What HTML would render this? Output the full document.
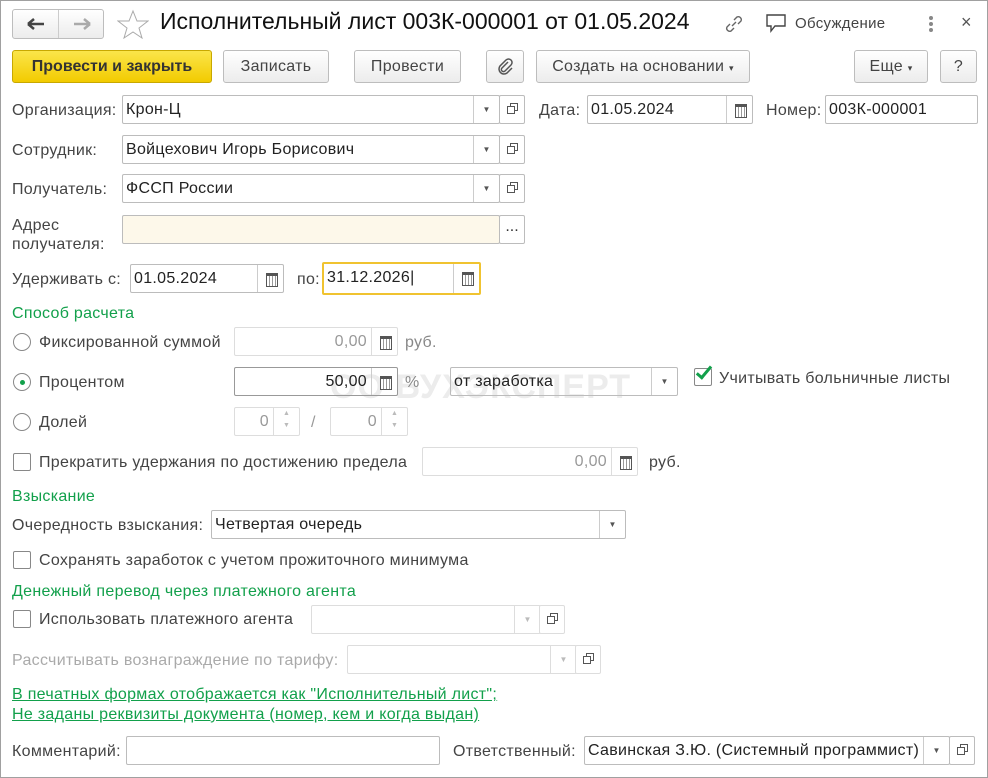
<!DOCTYPE html><html><head><meta charset="utf-8"><style>
*{box-sizing:border-box;margin:0;padding:0}
body{width:988px;height:778px;background:#fff;font-family:"Liberation Sans",Arial,sans-serif;font-size:16px;letter-spacing:0.3px;color:#333;position:relative;overflow:hidden}
.frame{position:absolute;left:0;top:0;width:988px;height:778px;border:1px solid #a0a0a0}
.a{position:absolute;white-space:nowrap}
.btn{position:absolute;height:33px;border:1px solid #bdbdbd;border-radius:3px;background:linear-gradient(#fff,#ececec);text-align:center;line-height:31px;color:#444;font-size:16px}
.in{position:absolute;height:29px;border:1px solid #bcbcbc;border-radius:2px;background:#fff;line-height:27px;padding-left:3px;color:#222;white-space:nowrap;overflow:hidden}
.dd{position:absolute;top:0;right:0;width:26px;height:27px;border-left:1px solid #ccc;text-align:center;font-size:8px;color:#555;line-height:27px;letter-spacing:0}
.op{position:absolute;height:29px;width:26px;border:1px solid #bcbcbc;border-radius:2px;background:#fff}
.op:after{content:"";position:absolute;left:7px;top:10px;width:6px;height:6px;border:1px solid #555;box-shadow:3px -3px 0 -1px #fff,3px -3px 0 0 #555}
.bx{position:absolute;height:29px;width:26px;border:1px solid #bcbcbc;border-radius:2px;background:#fff;text-align:center;line-height:22px;letter-spacing:0}
.g{color:#12a04b}
.lbl{position:absolute;white-space:nowrap;color:#444;margin-top:2px}
.rad{position:absolute;width:18px;height:18px;border:1px solid #888;border-radius:50%;background:#fff}
.chk{position:absolute;width:18px;height:18px;border:1px solid #888;border-radius:2px;background:#fff}
.cal{position:absolute;top:0;right:0;width:26px;height:27px;border-left:1px solid #ccc}
.cal:after{content:"";position:absolute;left:8px;top:8px;width:10px;height:10px;border:1px solid #555;border-top-width:3px;background:repeating-linear-gradient(90deg,#fff 0 2px,#999 2px 3px)}
.dis{color:#999}
</style></head><body>
<div class="frame"></div>
<div class="btn" style="left:12px;top:9px;width:92px;height:30px"></div>
<div class="a" style="left:58px;top:10px;width:1px;height:28px;background:#ccc"></div>
<svg class="a" style="left:26px;top:16px" width="20" height="16"><path d="M2 8 H18 M2 8 L8 3 M2 8 L8 13" fill="none" stroke="#444" stroke-width="2.5"/></svg>
<svg class="a" style="left:72px;top:16px" width="20" height="16"><path d="M2 8 H18 M18 8 L12 3 M18 8 L12 13" fill="none" stroke="#aaa" stroke-width="2.5"/></svg>
<svg class="a" style="left:117px;top:9px" width="32" height="30"><polygon points="16,2 20,12 31,12 22,19 25,29 16,23 7,29 10,19 1,12 12,12" fill="none" stroke="#aaa" stroke-width="1"/></svg>
<div class="a" style="left:160px;top:8px;font-size:23px;letter-spacing:0;color:#111">Исполнительный лист 003К-000001 от 01.05.2024</div>
<svg class="a" style="left:722px;top:12px" width="24" height="24"><path d="M10 14 L14 10 M8 12 L5 15 a3 3 0 0 0 4 4 L12 16 M12 8 L15 5 a3 3 0 0 1 4 4 L16 12" fill="none" stroke="#666" stroke-width="1.4"/></svg>
<svg class="a" style="left:765px;top:13px" width="24" height="22"><path d="M2 2 H20 V13 H10 L6 18 V13 H2 Z" fill="none" stroke="#444" stroke-width="1.4"/></svg>
<div class="a" style="left:795px;top:15px;color:#444;font-size:15px">Обсуждение</div>
<div class="a" style="left:929px;top:16px;width:4px;height:4px;background:#888;border-radius:50%;box-shadow:0 6px 0 #888,0 12px 0 #888"></div>
<div class="a" style="left:961px;top:12px;font-size:18px;color:#555">×</div>
<div class="btn" style="left:12px;top:50px;width:200px;background:linear-gradient(#fbe54a,#f2cb00);border-color:#c8a800;font-weight:bold;color:#333;letter-spacing:0">Провести и закрыть</div>
<div class="btn" style="left:223px;top:50px;width:106px">Записать</div>
<div class="btn" style="left:354px;top:50px;width:107px">Провести</div>
<div class="btn" style="left:486px;top:50px;width:38px"><svg width="18" height="20" style="margin-top:6px"><path d="M12 5 L6 11 a2 2 0 0 0 3 3 L15 8 a3.5 3.5 0 0 0 -5 -5 L4 9 a5 5 0 0 0 7 7 L16 11" fill="none" stroke="#555" stroke-width="1.5"/></svg></div>
<div class="btn" style="left:536px;top:50px;width:214px">Создать на основании <span style="font-size:9px">▾</span></div>
<div class="btn" style="left:854px;top:50px;width:74px">Еще <span style="font-size:9px">▾</span></div>
<div class="btn" style="left:940px;top:50px;width:37px">?</div>
<div class="lbl" style="left:12px;top:100px">Организация:</div>
<div class="in" style="left:122px;top:95px;width:378px">Крон-Ц<div class="dd">▼</div></div>
<div class="op" style="left:499px;top:95px"></div>
<div class="lbl" style="left:539px;top:100px">Дата:</div>
<div class="in" style="left:587px;top:95px;width:166px">01.05.2024<div class="cal"></div></div>
<div class="lbl" style="left:766px;top:100px">Номер:</div>
<div class="in" style="left:825px;top:95px;width:153px">003К-000001</div>
<div class="lbl" style="left:12px;top:140px">Сотрудник:</div>
<div class="in" style="left:122px;top:135px;width:378px">Войцехович Игорь Борисович<div class="dd">▼</div></div>
<div class="op" style="left:499px;top:135px"></div>
<div class="lbl" style="left:12px;top:179px">Получатель:</div>
<div class="in" style="left:122px;top:174px;width:378px">ФССП России<div class="dd">▼</div></div>
<div class="op" style="left:499px;top:174px"></div>
<div class="lbl" style="left:12px;top:214px;line-height:19px">Адрес<br>получателя:</div>
<div class="in" style="left:122px;top:215px;width:378px;background:#fdf8ea"></div>
<div class="bx" style="left:499px;top:215px">...</div>
<div class="lbl" style="left:12px;top:269px">Удерживать с:</div>
<div class="in" style="left:130px;top:264px;width:154px">01.05.2024<div class="cal"></div></div>
<div class="lbl" style="left:297px;top:269px">по:</div>
<div class="in" style="left:322px;top:262px;width:159px;height:33px;border:2px solid #f0c330;line-height:28px">31.12.2026|<div class="cal" style="height:29px"></div></div>
<div class="a g" style="left:12px;top:305px">Способ расчета</div>
<div class="rad" style="left:13px;top:333px"></div>
<div class="lbl" style="left:39px;top:332px">Фиксированной суммой</div>
<div class="in dis" style="left:234px;top:327px;width:164px;text-align:right;padding-right:30px;border-color:#ddd">0,00<div class="cal" style="border-color:#ddd"></div></div>
<div class="lbl dis" style="left:405px;top:332px;color:#888">руб.</div>
<div class="a" style="left:330px;top:368px;font-size:34px;font-weight:bold;color:#ececec;letter-spacing:1px">ОО БУХЭКСПЕРТ</div>
<div class="rad" style="left:13px;top:373px"><div style="position:absolute;left:6px;top:6px;width:5px;height:5px;border-radius:50%;background:#12a04b"></div></div>
<div class="lbl" style="left:39px;top:372px">Процентом</div>
<div class="in" style="left:234px;top:367px;width:164px;text-align:right;padding-right:30px;border-color:#999;background:transparent">50,00<div class="cal"></div></div>
<div class="lbl" style="left:405px;top:372px;color:#888">%</div>
<div class="in" style="left:450px;top:367px;width:228px;background:transparent">от заработка<div class="dd">▼</div></div>
<div class="a" style="left:694px;top:368px;width:18px;height:18px;border:1px solid #888;border-radius:2px"></div>
<div class="a" style="left:700px;top:363px;width:8px;height:16px;border-right:3px solid #12a04b;border-bottom:3px solid #12a04b;transform:rotate(40deg)"></div>
<div class="lbl" style="left:719px;top:368px">Учитывать больничные листы</div>
<div class="rad" style="left:13px;top:413px"></div>
<div class="lbl" style="left:39px;top:412px">Долей</div>
<div class="in dis" style="left:234px;top:407px;width:66px;text-align:right;padding-right:30px;border-color:#ddd">0<div class="dd" style="font-size:7px;line-height:12px;border-color:#ddd;color:#bbb">▲<br>▼</div></div>
<div class="lbl" style="left:311px;top:412px;color:#999">/</div>
<div class="in dis" style="left:330px;top:407px;width:78px;text-align:right;padding-right:30px;border-color:#ddd">0<div class="dd" style="font-size:7px;line-height:12px;border-color:#ddd;color:#bbb">▲<br>▼</div></div>
<div class="chk" style="left:13px;top:453px"></div>
<div class="lbl" style="left:39px;top:452px">Прекратить удержания по достижению предела</div>
<div class="in dis" style="left:422px;top:447px;width:216px;text-align:right;padding-right:30px;border-color:#ddd">0,00<div class="cal" style="border-color:#ddd"></div></div>
<div class="lbl" style="left:649px;top:452px">руб.</div>
<div class="a g" style="left:12px;top:488px">Взыскание</div>
<div class="lbl" style="left:12px;top:515px">Очередность взыскания:</div>
<div class="in" style="left:211px;top:510px;width:415px">Четвертая очередь<div class="dd">▼</div></div>
<div class="chk" style="left:13px;top:551px"></div>
<div class="lbl" style="left:39px;top:550px">Сохранять заработок с учетом прожиточного минимума</div>
<div class="a g" style="left:12px;top:583px">Денежный перевод через платежного агента</div>
<div class="chk" style="left:13px;top:610px"></div>
<div class="lbl" style="left:39px;top:609px">Использовать платежного агента</div>
<div class="in" style="left:311px;top:605px;width:230px;border-color:#ddd"><div class="dd" style="border-color:#ddd;color:#bbb">▼</div></div>
<div class="op" style="left:539px;top:605px;border-color:#ddd"></div>
<div class="lbl" style="left:12px;top:650px;color:#aaa">Рассчитывать вознаграждение по тарифу:</div>
<div class="in" style="left:347px;top:645px;width:230px;border-color:#ddd"><div class="dd" style="border-color:#ddd;color:#bbb">▼</div></div>
<div class="op" style="left:575px;top:645px;border-color:#ddd"></div>
<div class="a g" style="left:12px;top:686px;text-decoration:underline">В печатных формах отображается как "Исполнительный лист";</div>
<div class="a g" style="left:12px;top:706px;text-decoration:underline">Не заданы реквизиты документа (номер, кем и когда выдан)</div>
<div class="lbl" style="left:12px;top:741px">Комментарий:</div>
<div class="in" style="left:126px;top:736px;width:314px"></div>
<div class="lbl" style="left:453px;top:741px">Ответственный:</div>
<div class="in" style="left:584px;top:736px;width:366px">Савинская З.Ю. (Системный программист)<div class="dd">▼</div></div>
<div class="op" style="left:949px;top:736px"></div>
</body></html>
